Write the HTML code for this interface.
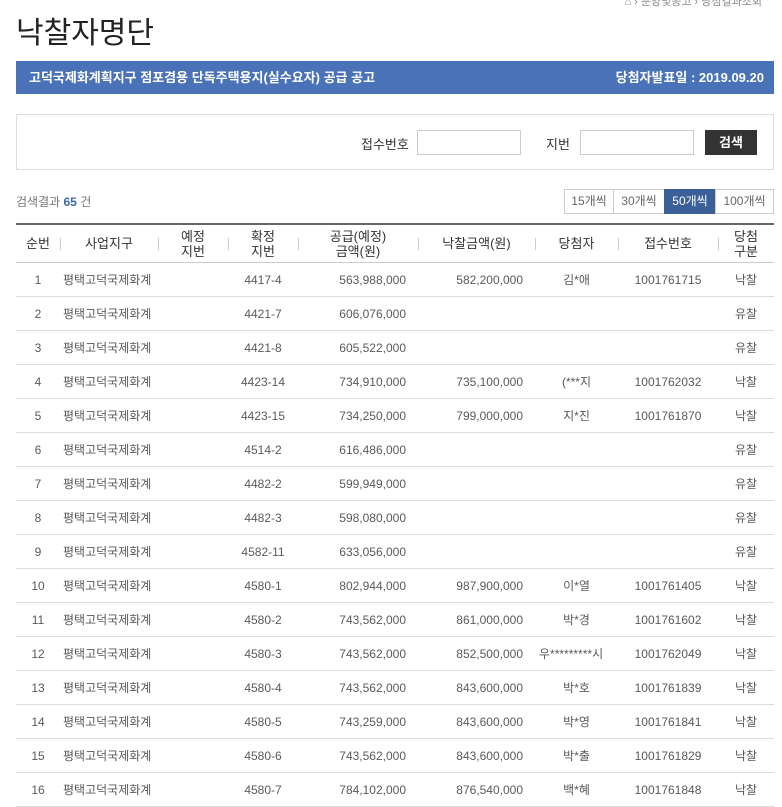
<!DOCTYPE html>
<html><head><meta charset="utf-8"><style>
body{margin:0;width:782px;height:806px;overflow:hidden;background:#fff;font-family:"Liberation Sans","Noto Sans CJK KR",sans-serif;color:#555;position:relative}
.a{position:absolute}
h1{position:absolute;left:16px;top:8px;margin:0;font-size:30px;font-weight:400;color:#222}
.bar{left:16px;top:61px;width:758px;height:33px;background:#4a72b8;color:#fff;font-size:13px;font-weight:bold;line-height:33px}
.sb{left:16px;top:114px;width:756px;height:54px;border:1px solid #ddd}
.inp{border:1px solid #ccc;height:23px;top:130px;background:#fff}
.pg{top:189px;height:23px;border:1px solid #ccc;font-size:12px;line-height:23px;text-align:center;color:#666;background:#fff}
table{position:absolute;left:16px;top:223px;width:758px;border-collapse:collapse;table-layout:fixed;border-top:2px solid #666}
th{font-weight:400;color:#333;font-size:13px;line-height:15px;height:37px;border-bottom:1px solid #ccc;position:relative;padding:0}
th+th:before{content:"";position:absolute;left:0;top:13px;height:12px;border-left:1px solid #ccc}
td{height:33px;border-bottom:1px solid #ddd;font-size:12px;text-align:center;padding:0;white-space:nowrap;overflow:hidden;color:#5a5a5a}
td.l{text-align:left;padding-left:3px}
td.r{text-align:right;padding-right:12px}
</style></head><body>
<div class="a" style="right:20px;top:-7px;font-size:11px;color:#888">⌂ › 분양및공고 › 당첨결과조회</div>
<h1>낙찰자명단</h1>
<div class="a bar"><span style="margin-left:13px">고덕국제화계획지구 점포겸용 단독주택용지(실수요자) 공급 공고</span><span style="position:absolute;right:10px">당첨자발표일 : 2019.09.20</span></div>
<div class="a sb"></div>
<div class="a" style="left:361px;top:134px;font-size:13px;color:#333">접수번호</div>
<div class="a inp" style="left:417px;width:102px"></div>
<div class="a" style="left:546px;top:134px;font-size:13px;color:#333">지번</div>
<div class="a inp" style="left:580px;width:112px"></div>
<div class="a" style="left:705px;top:130px;width:52px;height:25px;background:#333;color:#fff;font-size:13px;font-weight:bold;text-align:center;line-height:25px">검색</div>
<div class="a" style="left:16px;top:193px;font-size:12px;color:#777">검색결과 <span style="color:#3b6aa6;font-weight:bold">65</span> 건</div>
<div class="a pg" style="left:564px;width:48px">15개씩</div>
<div class="a pg" style="left:613px;width:50px">30개씩</div>
<div class="a pg" style="left:664px;width:50px;background:#3b5f99;color:#fff;border-color:#3b5f99">50개씩</div>
<div class="a pg" style="left:715px;width:57px">100개씩</div>
<table>
<colgroup><col style="width:44px"><col style="width:98px"><col style="width:70px"><col style="width:70px"><col style="width:120px"><col style="width:117px"><col style="width:83px"><col style="width:100px"><col style="width:56px"></colgroup>
<tr><th>순번</th><th>사업지구</th><th>예정<br>지번</th><th>확정<br>지번</th><th>공급(예정)<br>금액(원)</th><th>낙찰금액(원)</th><th>당첨자</th><th>접수번호</th><th>당첨<br>구분</th></tr>
<tr><td>1</td><td class="l">평택고덕국제화계</td><td></td><td>4417-4</td><td class="r">563,988,000</td><td class="r">582,200,000</td><td>김*애</td><td>1001761715</td><td>낙찰</td></tr>
<tr><td>2</td><td class="l">평택고덕국제화계</td><td></td><td>4421-7</td><td class="r">606,076,000</td><td></td><td></td><td></td><td>유찰</td></tr>
<tr><td>3</td><td class="l">평택고덕국제화계</td><td></td><td>4421-8</td><td class="r">605,522,000</td><td></td><td></td><td></td><td>유찰</td></tr>
<tr><td>4</td><td class="l">평택고덕국제화계</td><td></td><td>4423-14</td><td class="r">734,910,000</td><td class="r">735,100,000</td><td>(***지</td><td>1001762032</td><td>낙찰</td></tr>
<tr><td>5</td><td class="l">평택고덕국제화계</td><td></td><td>4423-15</td><td class="r">734,250,000</td><td class="r">799,000,000</td><td>지*진</td><td>1001761870</td><td>낙찰</td></tr>
<tr><td>6</td><td class="l">평택고덕국제화계</td><td></td><td>4514-2</td><td class="r">616,486,000</td><td></td><td></td><td></td><td>유찰</td></tr>
<tr><td>7</td><td class="l">평택고덕국제화계</td><td></td><td>4482-2</td><td class="r">599,949,000</td><td></td><td></td><td></td><td>유찰</td></tr>
<tr><td>8</td><td class="l">평택고덕국제화계</td><td></td><td>4482-3</td><td class="r">598,080,000</td><td></td><td></td><td></td><td>유찰</td></tr>
<tr><td>9</td><td class="l">평택고덕국제화계</td><td></td><td>4582-11</td><td class="r">633,056,000</td><td></td><td></td><td></td><td>유찰</td></tr>
<tr><td>10</td><td class="l">평택고덕국제화계</td><td></td><td>4580-1</td><td class="r">802,944,000</td><td class="r">987,900,000</td><td>이*열</td><td>1001761405</td><td>낙찰</td></tr>
<tr><td>11</td><td class="l">평택고덕국제화계</td><td></td><td>4580-2</td><td class="r">743,562,000</td><td class="r">861,000,000</td><td>박*경</td><td>1001761602</td><td>낙찰</td></tr>
<tr><td>12</td><td class="l">평택고덕국제화계</td><td></td><td>4580-3</td><td class="r">743,562,000</td><td class="r">852,500,000</td><td style="text-align:left;padding-left:4px">우*********시</td><td>1001762049</td><td>낙찰</td></tr>
<tr><td>13</td><td class="l">평택고덕국제화계</td><td></td><td>4580-4</td><td class="r">743,562,000</td><td class="r">843,600,000</td><td>박*호</td><td>1001761839</td><td>낙찰</td></tr>
<tr><td>14</td><td class="l">평택고덕국제화계</td><td></td><td>4580-5</td><td class="r">743,259,000</td><td class="r">843,600,000</td><td>박*영</td><td>1001761841</td><td>낙찰</td></tr>
<tr><td>15</td><td class="l">평택고덕국제화계</td><td></td><td>4580-6</td><td class="r">743,562,000</td><td class="r">843,600,000</td><td>박*출</td><td>1001761829</td><td>낙찰</td></tr>
<tr><td>16</td><td class="l">평택고덕국제화계</td><td></td><td>4580-7</td><td class="r">784,102,000</td><td class="r">876,540,000</td><td>백*혜</td><td>1001761848</td><td>낙찰</td></tr>
</table>
</body></html>
